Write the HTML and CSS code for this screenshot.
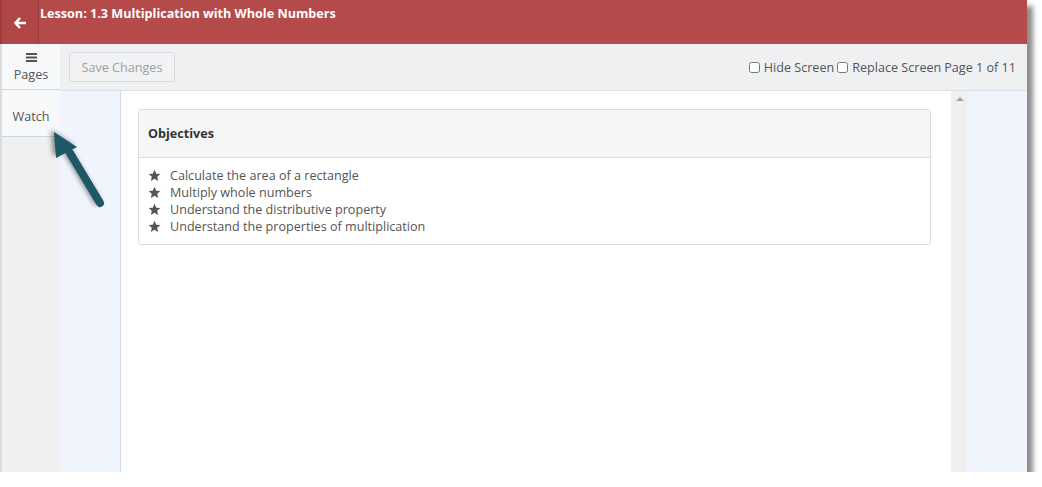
FILE: index.html
```html
<!DOCTYPE html>
<html lang="en">
<head>
    <meta charset="UTF-8">
    <meta name="viewport" content="width=device-width, initial-scale=1.0">
    <title>Lesson: 1.3 Multiplication with Whole Numbers</title>
    <link rel="stylesheet" href="styles.css">
</head>
<body>

    <div class="frame">
        <div class="top-bar">
            <button class="back-btn" type="button">
                <svg width="13" height="12" viewBox="0 0 13 12">
                    <path d="M6 1 L1.5 6 L6 11 M1.5 6 H12" fill="none" stroke="#fff" stroke-width="2.6" stroke-linejoin="miter"/>
                </svg>
            </button>
            <div class="lesson-title">Lesson: 1.3 Multiplication with Whole Numbers</div>
        </div>

        <div class="main">
            <div class="sidebar">
                <div class="tab tab-pages">
                    <svg class="burger" width="11" height="9" viewBox="0 0 11 9">
                        <rect x="0" y="0" width="11" height="2" fill="#555"/>
                        <rect x="0" y="3.5" width="11" height="2" fill="#555"/>
                        <rect x="0" y="7" width="11" height="2" fill="#555"/>
                    </svg>
                    <span>Pages</span>
                </div>
                <div class="tab tab-watch">Watch</div>
            </div>

            <div class="workspace">
                <div class="toolbar">
                    <button class="save-btn" type="button">Save Changes</button>
                    <div class="toolbar-right">
                        <label><input type="checkbox"> Hide Screen</label>
                        <label><input type="checkbox"> Replace Screen</label>
                        <span>Page 1 of 11</span>
                    </div>
                </div>

                <div class="stage">
                    <div class="gutter gutter-left"></div>
                    <div class="content">
                        <div class="panel">
                            <div class="panel-heading">Objectives</div>
                            <ul class="objectives">
                                <li><svg class="star" viewBox="0 0 24 24"><path d="M12 1.5l3.2 7.1 7.6.7-5.8 5.1 1.7 7.6L12 18l-6.7 4 1.7-7.6L1.2 9.3l7.6-.7z"/></svg>Calculate the area of a rectangle</li>
                                <li><svg class="star" viewBox="0 0 24 24"><path d="M12 1.5l3.2 7.1 7.6.7-5.8 5.1 1.7 7.6L12 18l-6.7 4 1.7-7.6L1.2 9.3l7.6-.7z"/></svg>Multiply whole numbers</li>
                                <li><svg class="star" viewBox="0 0 24 24"><path d="M12 1.5l3.2 7.1 7.6.7-5.8 5.1 1.7 7.6L12 18l-6.7 4 1.7-7.6L1.2 9.3l7.6-.7z"/></svg>Understand the distributive property</li>
                                <li><svg class="star" viewBox="0 0 24 24"><path d="M12 1.5l3.2 7.1 7.6.7-5.8 5.1 1.7 7.6L12 18l-6.7 4 1.7-7.6L1.2 9.3l7.6-.7z"/></svg>Understand the properties of multiplication</li>
                            </ul>
                        </div>
                    </div>
                    <div class="scrollbar"><span class="scroll-up"></span></div>
                    <div class="gutter gutter-right"></div>
                </div>
            </div>
        </div>

        <!-- callout arrow pointing at the Watch tab -->
        <svg class="callout" width="80" height="100" viewBox="0 0 80 100">
            <defs>
                <filter id="soft" x="-50%" y="-50%" width="200%" height="200%">
                    <feGaussianBlur stdDeviation="2.5"/>
                </filter>
            </defs>
            <g transform="translate(-3,-2)" opacity="0.45" filter="url(#soft)">
                <line x1="60" y1="80" x2="30" y2="30" stroke="#000" stroke-width="8" stroke-linecap="round"/>
                <polygon points="14,9 16,35 37,24" fill="#000"/>
            </g>
            <line x1="60" y1="80" x2="30" y2="30" stroke="#1e5766" stroke-width="8" stroke-linecap="round"/>
            <polygon points="14,9 16,35 37,24" fill="#1e5766"/>
        </svg>
    </div>

</body>
</html>
```

FILE: styles.css
```css
body {
    margin: 0;
    background-color: #fff;
    font-family: "Open Sans", Arial, sans-serif;
}

.frame {
    position: relative;
    width: 1027px;
    height: 472px;
    display: flex;
    flex-direction: column;
    background-color: #fff;
    box-shadow: 6px 6px 5px rgba(0, 0, 0, 0.45);
}

.top-bar {
    height: 44px;
    display: flex;
    background-color: #b44b4a;
    border-left: 2px solid #9e3b3b;
    flex-shrink: 0;
}
.back-btn {
    width: 37px;
    padding: 0;
    border: none;
    border-right: 1px solid #9a3a3a;
    background-color: #b04645;
    display: flex;
    align-items: center;
    justify-content: center;
    cursor: pointer;
}
.back-btn svg {
    margin-top: 2px;
}
.lesson-title {
    color: #fff;
    font-weight: bold;
    font-size: 12.6px;
    line-height: 20px;
    padding: 4px 0 0 1px;
}

.main {
    flex: 1;
    display: flex;
    border-left: 2px solid #dcdcdc;
    min-height: 0;
}

.sidebar {
    width: 58px;
    background-color: #f0f0f0;
    flex-shrink: 0;
}
.tab {
    background-color: #f7f8fa;
    color: #555;
    font-size: 12.6px;
    text-align: center;
    border-bottom: 1px solid #cdd7df;
}
.tab-pages {
    height: 46px;
    display: flex;
    flex-direction: column;
    align-items: center;
    padding-top: 9px;
    box-sizing: border-box;
    line-height: 17px;
}
.burger {
    display: block;
    margin-bottom: 4px;
}
.tab-watch {
    height: 46px;
    line-height: 53px;
}

.workspace {
    flex: 1;
    display: flex;
    flex-direction: column;
    min-width: 0;
}

.toolbar {
    height: 47px;
    flex-shrink: 0;
    background-color: #eff0f2;
    border-bottom: 1px solid #dcdfe3;
    display: flex;
    align-items: center;
    justify-content: space-between;
    padding: 0 11px 0 9px;
    box-sizing: border-box;
}
.save-btn {
    height: 30px;
    width: 106px;
    padding: 0;
    font-family: "Open Sans", Arial, sans-serif;
    font-size: 12.6px;
    color: #a0a0a0;
    background-color: #f1f2f4;
    border: 1px solid #dadcdf;
    border-radius: 3px;
}
.toolbar-right {
    display: flex;
    align-items: center;
    font-size: 12.6px;
    color: #555;
}
.toolbar-right label {
    display: flex;
    align-items: center;
    margin-right: 3px;
}
.toolbar-right input {
    width: 11px;
    height: 11px;
    margin: 0 4px 0 0;
}

.stage {
    flex: 1;
    display: flex;
    min-height: 0;
}
.gutter {
    width: 60px;
    background-color: #f0f5fd;
    flex-shrink: 0;
}
.gutter-left {
    border-right: 1px solid #d5dde7;
}
.content {
    flex: 1;
    padding: 18px 20px 0 17px;
}
.scrollbar {
    width: 16px;
    background-color: #f0f0f0;
    position: relative;
}
.scroll-up {
    position: absolute;
    left: 5px;
    top: 6px;
    width: 0;
    height: 0;
    border-left: 4px solid transparent;
    border-right: 4px solid transparent;
    border-bottom: 4px solid #a3a3a3;
}

.panel {
    border: 1px solid #dcdcdc;
    border-radius: 3px;
    background-color: #fff;
}
.panel-heading {
    height: 47px;
    line-height: 47px;
    padding: 0 9px;
    background-color: #f5f6f8;
    border-bottom: 1px solid #dcdcdc;
    font-size: 12.6px;
    font-weight: bold;
    color: #333;
}
.objectives {
    list-style: none;
    margin: 0;
    padding: 9px;
    font-size: 12.6px;
    line-height: 17px;
    color: #555;
}
.objectives li {
    display: flex;
    align-items: center;
}
.star {
    width: 13px;
    height: 13px;
    fill: #555;
    margin-right: 9px;
}

.callout {
    position: absolute;
    left: 40px;
    top: 123px;
    overflow: visible;
}
```
